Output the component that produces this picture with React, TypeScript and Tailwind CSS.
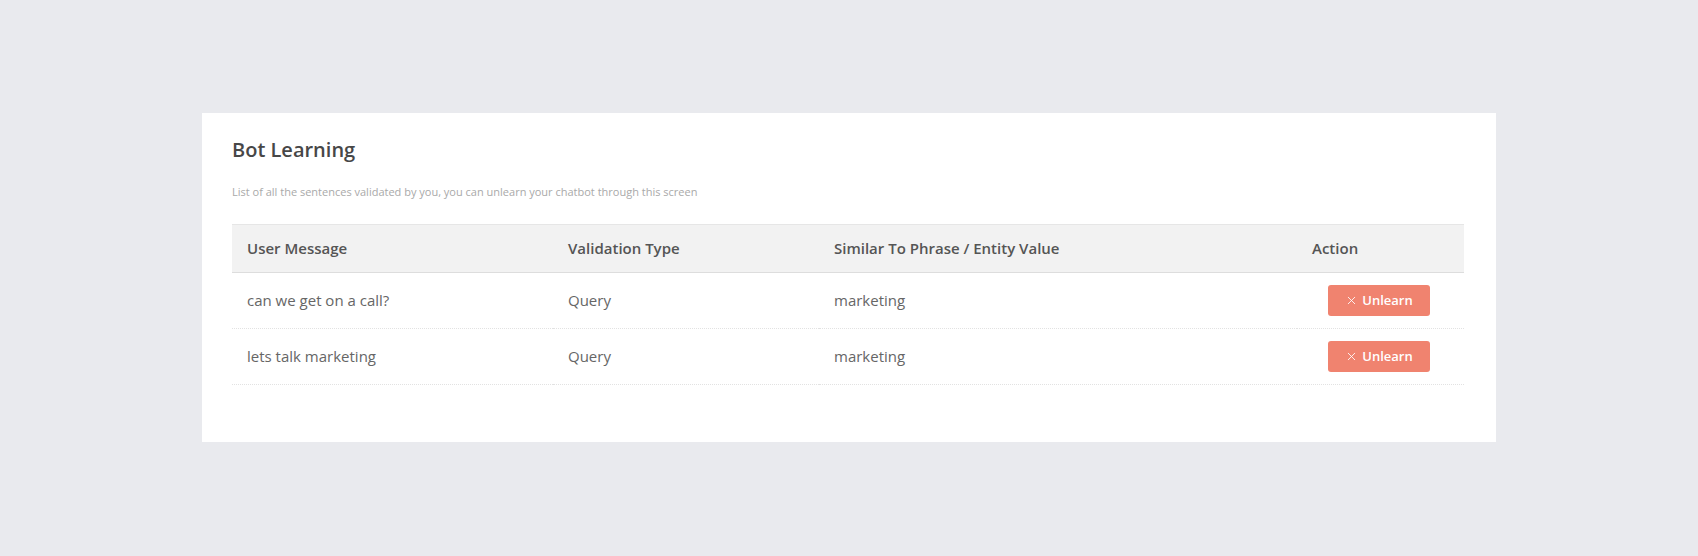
import { X } from 'lucide-react'

interface LearnedRow {
  message: string
  type: string
  value: string
}

const rows: LearnedRow[] = [
  { message: 'can we get on a call?', type: 'Query', value: 'marketing' },
  { message: 'lets talk marketing', type: 'Query', value: 'marketing' }
]

export default function App(): React.JSX.Element {
  return (
    <div
      className="min-h-[556px] w-full bg-[#e9eaee] pt-[113px] pl-[202px] pr-[202px]"
      style={{ fontFamily: '"Open Sans", "Noto Sans", sans-serif' }}
    >
      <div className="w-[1294px] h-[329px] bg-white px-[30px] pt-[23px]">
        <h1 className="text-[20px] font-semibold text-[#474747] leading-[28px]">Bot Learning</h1>
        <p className="mt-[20px] text-[11px] text-[#a9a9a9] leading-[16px]">
          List of all the sentences validated by you, you can unlearn your chatbot through this screen
        </p>

        <table className="mt-[24px] w-[1232px] border-collapse table-fixed">
          <colgroup>
            <col className="w-[321px]" />
            <col className="w-[266px]" />
            <col className="w-[478px]" />
            <col className="w-[167px]" />
          </colgroup>
          <thead>
            <tr className="bg-[#f2f2f2] border-t border-t-[#e6e6e6] border-b border-b-[#dddddd]">
              {['User Message', 'Validation Type', 'Similar To Phrase / Entity Value', 'Action'].map((h) => (
                <th
                  key={h}
                  className="h-[48px] px-[15px] text-left text-[15px] font-semibold text-[#555] align-middle"
                >
                  {h}
                </th>
              ))}
            </tr>
          </thead>
          <tbody>
            {rows.map((r) => (
              <tr key={r.message} className="border-b border-dotted border-b-[#e2e2e2]">
                <td className="h-[56px] px-[15px] text-[15px] text-[#666] align-middle">{r.message}</td>
                <td className="px-[15px] text-[15px] text-[#666] align-middle">{r.type}</td>
                <td className="px-[15px] text-[15px] text-[#666] align-middle">{r.value}</td>
                <td className="px-[15px] align-middle">
                  <button className="ml-[16px] inline-flex items-center justify-center gap-[4px] w-[102px] h-[31px] rounded-[3px] bg-[#f0836f] text-white text-[13px] font-semibold">
                    <X size={13} strokeWidth={1.6} />
                    Unlearn
                  </button>
                </td>
              </tr>
            ))}
          </tbody>
        </table>
      </div>
    </div>
  )
}
